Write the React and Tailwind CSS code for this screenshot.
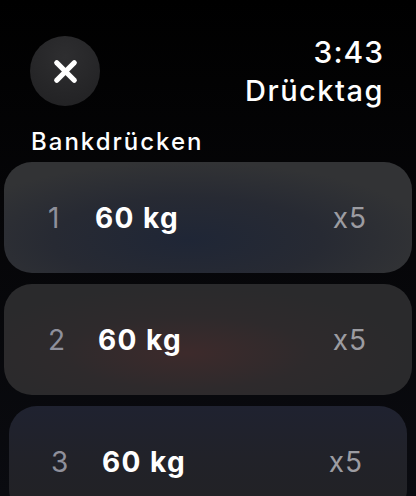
import { X } from 'lucide-react';

const sets = [
  { n: 1, kg: 60, reps: 5, tone: 'blue', numW: 'w-[47px]' },
  { n: 2, kg: 60, reps: 5, tone: 'red', numW: 'w-[50px]' },
  { n: 3, kg: 60, reps: 5, tone: 'dim', numW: 'w-[51px]' },
];

const toneBg = {
  blue: 'bg-[radial-gradient(ellipse_60%_70%_at_45%_70%,#1f2636_0%,#272a33_55%,#323335_100%)]',
  red: 'bg-[radial-gradient(ellipse_55%_60%_at_45%_62%,#3d2a2b_0%,#2e2a2c_55%,#2a2a2c_100%)]',
  dim: 'bg-[linear-gradient(180deg,#1f2230_0%,#212229_45%,#222224_100%)]',
};

const SetRow = ({ set, inset }) => (
  <div
    className={`h-[111px] rounded-[28px] flex items-center ${toneBg[set.tone]} ${
      inset ? 'mx-[5px] pl-[42px] pr-[44px]' : 'pl-[44px] pr-[45px]'
    }`}
  >
    <span className={`${set.numW} text-[28px] text-[#8f909b] tracking-[1px]`}>{set.n}</span>
    <span className="text-[28px] font-bold text-white tracking-[1.4px]">{set.kg} kg</span>
    <span className="ml-auto text-[28px] text-[#9c9ca1] tracking-[1px]">x{set.reps}</span>
  </div>
);

export default function App() {
  return (
    <div
      className="w-[416px] h-[496px] overflow-hidden bg-[linear-gradient(180deg,#000_0%,#050507_40%,#0a0b10_100%)] text-white"
      style={{ fontFamily: 'Inter, "Noto Sans", sans-serif' }}
    >
      <div className="flex justify-between pt-[36px] pl-[30px] pr-[32px]">
        <button className="w-[70px] h-[70px] rounded-full bg-[radial-gradient(circle_at_50%_30%,#2e2e30_0%,#202022_100%)] flex items-center justify-center">
          <X size={35} strokeWidth={3.6} className="text-white" />
        </button>
        <div className="text-right leading-none font-medium">
          <div className="text-[30px] mt-[1px] tracking-[1px]">3:43</div>
          <div className="text-[29px] mt-[9px] tracking-[1.5px]">Drücktag</div>
        </div>
      </div>
      <div className="pl-[31px] mt-[24px] text-[24px] font-medium tracking-[2px] leading-none">Bankdrücken</div>
      <div className="px-[4px] mt-[8px] flex flex-col gap-[11px]">
        {sets.map((s, i) => (
          <SetRow key={s.n} set={s} inset={i === 2} />
        ))}
      </div>
    </div>
  );
}
